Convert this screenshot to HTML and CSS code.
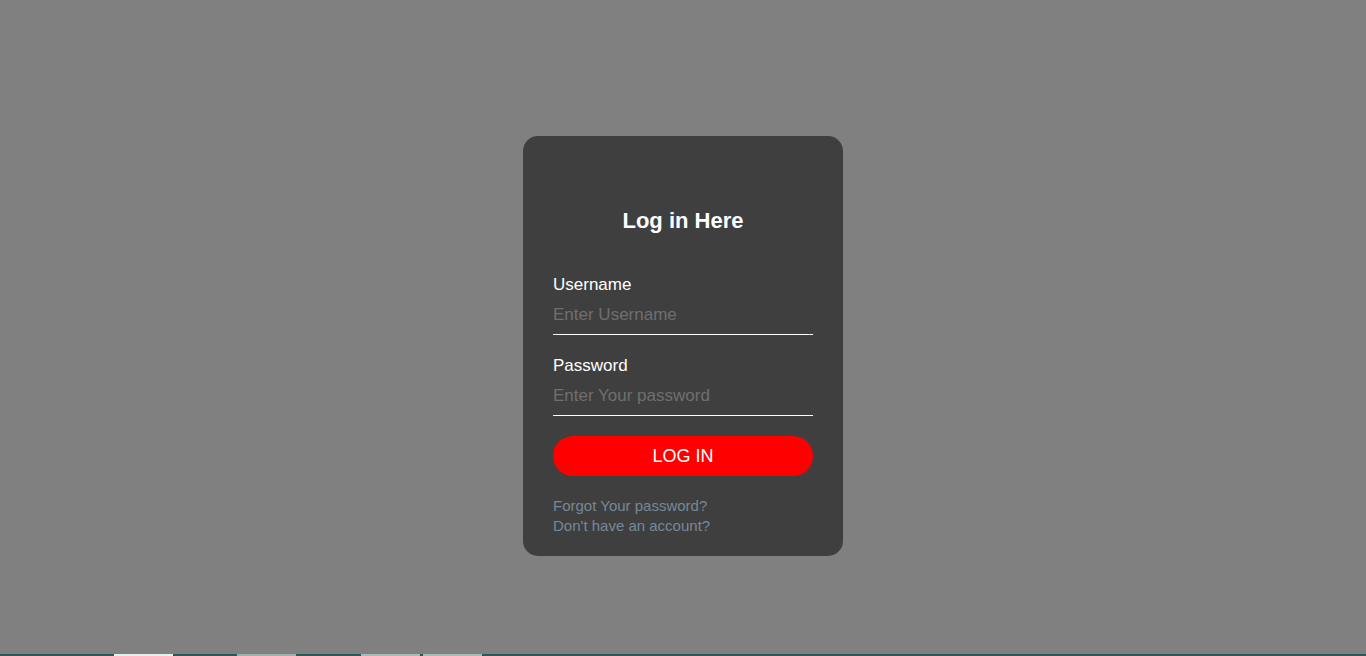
FILE: index.html
```html
<!DOCTYPE html>
<html lang="en">
<head>
<meta charset="utf-8">
<title>Log in Here</title>
<link rel="stylesheet" href="styles.css">
</head>
<body>
<main class="stage">
  <form class="card" onsubmit="return false">
    <h1 class="title">Log in Here</h1>
    <label class="label" for="user">Username</label>
    <input class="field" id="user" type="text" placeholder="Enter Username">
    <label class="label label-next" for="pass">Password</label>
    <input class="field" id="pass" type="password" placeholder="Enter Your password">
    <button class="btn" type="submit">LOG IN</button>
    <div class="links">
      <a class="link" href="#">Forgot Your password?</a>
      <a class="link" href="#">Don't have an account?</a>
    </div>
  </form>
</main>
<footer class="strip">
  <span class="tab tab-a"></span>
  <span class="tab tab-b"></span>
  <span class="tab tab-c"></span>
  <span class="tab tab-d"></span>
</footer>
</body>
</html>
```
FILE: styles.css
```css
* { box-sizing: border-box; }
html, body { margin: 0; padding: 0; }
body {
  height: 656px;
  overflow: hidden;
  background: #808080;
  font-family: "Liberation Sans", Arial, sans-serif;
  display: flex;
  flex-direction: column;
}
.stage {
  height: 654px;
  display: flex;
  justify-content: center;
  align-items: flex-start;
  padding-top: 136px;
}
.card {
  width: 320px;
  height: 420px;
  background: #3f3f3f;
  border-radius: 15px;
  padding: 72px 30px 20px;
  display: flex;
  flex-direction: column;
  margin: 0;
}
.title {
  margin: 0 0 41px;
  font-size: 22px;
  line-height: 26px;
  font-weight: bold;
  color: #ffffff;
  text-align: center;
}
.label {
  font-size: 17px;
  line-height: 20px;
  color: #ffffff;
}
.label-next { margin-top: 21px; }
.field {
  width: 100%;
  height: 40px;
  border: none;
  border-bottom: 1px solid #ffffff;
  background: transparent;
  padding: 0;
  outline: none;
  font-family: inherit;
  font-size: 17px;
  color: #ffffff;
}
.field::placeholder { color: #6f6f6f; }
.btn {
  margin-top: 20px;
  height: 40px;
  width: 100%;
  border: none;
  border-radius: 20px;
  background: #ff0000;
  color: #ffffff;
  font-family: inherit;
  font-size: 18px;
  padding: 0;
  cursor: pointer;
}
.links {
  margin-top: 20px;
  display: flex;
  flex-direction: column;
}
.link {
  font-size: 15px;
  line-height: 20px;
  color: #778899;
  text-decoration: none;
}
.strip {
  height: 2px;
  background: #2f5656;
  display: flex;
}
.tab { height: 2px; width: 59px; }
.tab-a { margin-left: 114px; background: #e8eeee; }
.tab-b { margin-left: 64px; background: #9fb0ad; }
.tab-c { margin-left: 65px; background: #a9b9b7; }
.tab-d { margin-left: 3px; background: #a9b9b7; }
```
